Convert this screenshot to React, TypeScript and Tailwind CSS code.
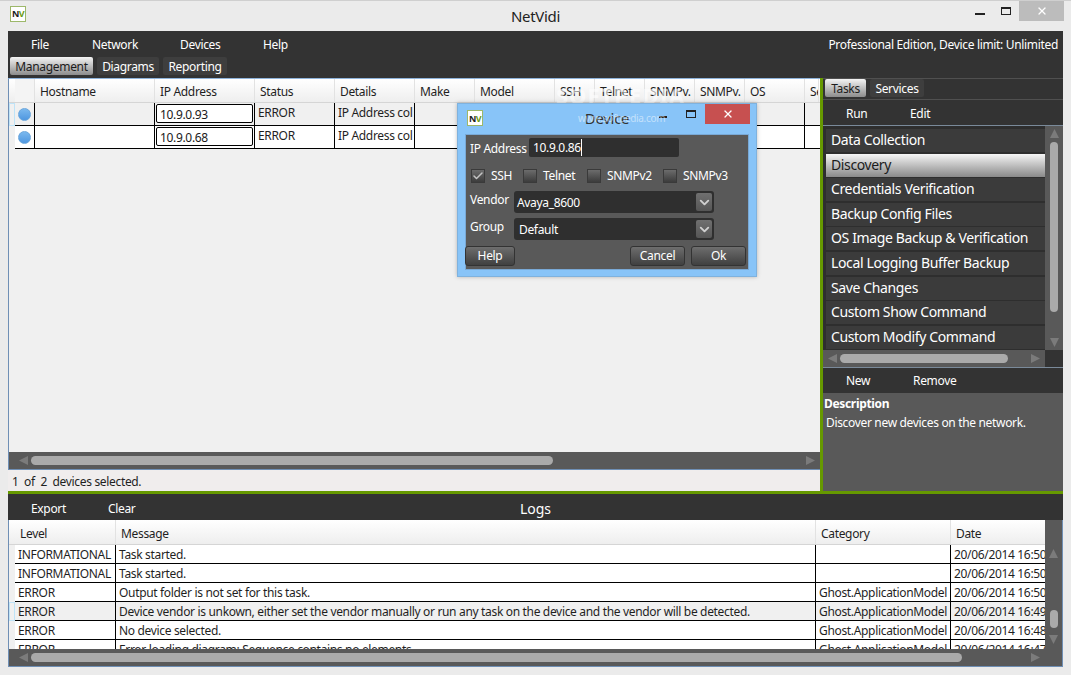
import React from "react";
import { Check, ChevronDown, X } from "lucide-react";

const deviceCols = [
  { name: "Hostname", w: "w-[120px]" },
  { name: "IP Address", w: "w-[100px]" },
  { name: "Status", w: "w-[80px]" },
  { name: "Details", w: "w-[80px]" },
  { name: "Make", w: "w-[60px]" },
  { name: "Model", w: "w-[80px]" },
  { name: "SSH", w: "w-[40px]" },
  { name: "Telnet", w: "w-[50px]" },
  { name: "SNMPv.", w: "w-[50px]" },
  { name: "SNMPv.", w: "w-[50px]" },
  { name: "OS", w: "w-[60px]" },
  { name: "Se", w: "w-[14px]" },
];

const tasks = [
  "Data Collection",
  "Discovery",
  "Credentials Verification",
  "Backup Config Files",
  "OS Image Backup & Verification",
  "Local Logging Buffer Backup",
  "Save Changes",
  "Custom Show Command",
  "Custom Modify Command",
];

const logs = [
  ["INFORMATIONAL", "Task started.", "", "20/06/2014 16:50"],
  ["INFORMATIONAL", "Task started.", "", "20/06/2014 16:50"],
  ["ERROR", "Output folder is not set for this task.", "Ghost.ApplicationModel", "20/06/2014 16:50"],
  ["ERROR", "Device vendor is unkown, either set the vendor manually or run any task on the device and the vendor will be detected.", "Ghost.ApplicationModel", "20/06/2014 16:49"],
  ["ERROR", "No device selected.", "Ghost.ApplicationModel", "20/06/2014 16:48"],
  ["ERROR", "Error loading diagram: Sequence contains no elements", "Ghost.ApplicationModel", "20/06/2014 16:47"],
];

const NvLogo = () => (
  <div className="w-[16px] h-[16px] bg-white border border-[#9db86a] flex items-center justify-center text-[9px] leading-none font-bold tracking-[-0.5px]">
    <span className="text-[#222]">N</span>
    <span className="text-[#6a9a10]">V</span>
  </div>
);

const Tri = ({ dir, className }: { dir: "l" | "r" | "u" | "d"; className?: string }) => {
  const pts = { l: "9,0 9,9 0,4.5", r: "0,0 0,9 9,4.5", u: "0,9 9,9 4.5,0", d: "0,0 9,0 4.5,9" }[dir];
  return (
    <svg width="9" height="9" viewBox="0 0 9 9" className={className}>
      <polygon points={pts} fill="#7b7b7b" />
    </svg>
  );
};

const HScroll = ({ thumb, pad, rest }: { thumb: string; pad: string; rest: string }) => (
  <div className={`h-full flex items-center bg-[#595959] ${pad}`}>
    <Tri dir="l" />
    <div className={`h-[9px] rounded-full bg-[#aaaaaa] ml-[3px] ${thumb}`} />
    <div className="flex-1" />
    <Tri dir="r" className={rest} />
  </div>
);

const Tab = ({ label, active, w }: { label: string; active?: boolean; w: string }) => (
  <div
    className={`h-[18px] rounded-[2px] pt-[1px] flex items-center justify-center ${w} ${
      active ? "bg-gradient-to-b from-[#f4f4f4] to-[#8d8d8d] text-[#1c1c1c]" : "bg-[#3e3e3e] text-white"
    }`}
  >
    {label}
  </div>
);

const Cb = ({ checked, label, w }: { checked?: boolean; label: string; w: string }) => (
  <div className={`flex items-center ${w}`}>
    <div className="w-[14px] h-[14px] bg-gradient-to-b from-[#6c6c6c] to-[#3c3c3c] border border-[#3a3a3a] flex items-center justify-center">
      {checked && <Check className="w-[12px] h-[12px] text-[#c4c4c4]" strokeWidth={3} />}
    </div>
    <span className="ml-[6px] text-white">{label}</span>
  </div>
);

const Combo = ({ value, pad }: { value: string; pad: string }) => (
  <div className={`w-[200px] h-[22px] bg-[#2f2f2f] rounded-[3px] flex items-center text-white ${pad}`}>
    <span className="flex-1 pt-[1px]">{value}</span>
    <div className="w-[16px] h-[18px] mr-[2px] rounded-[2px] bg-gradient-to-b from-[#707070] to-[#565656] flex items-center justify-center">
      <ChevronDown className="w-[15px] h-[15px] text-[#d0d0d0]" strokeWidth={3} />
    </div>
  </div>
);

const DlgBtn = ({ label, w }: { label: string; w: string }) => (
  <div className={`h-[20px] ${w} rounded-[3px] border border-[#333] bg-gradient-to-b from-[#6e6e6e] to-[#404040] text-white flex items-center justify-center`}>
    {label}
  </div>
);

const DeviceRow = ({ ip, alt }: { ip: string; alt?: boolean }) => (
  <div className={`flex h-[23px] ${alt ? "bg-[#f0f0f0]" : "bg-white"}`}>
    <div className={`w-[6px] bg-[#f0f0f0] ${alt ? "border border-[#bfe3f7]" : ""}`} />
    <div className="flex flex-1 border-b border-black">
      <div className="w-[20px] border-r border-black flex items-center justify-center">
        <div className="w-[13px] h-[13px] rounded-full bg-gradient-to-b from-[#7ab8ee] to-[#4f97e0] border border-[#6aa6dc]" />
      </div>
      <div className="w-[120px] border-r border-black" />
      <div className="w-[100px] border-r border-black p-[1px]">
        <div className="h-[19px] border border-black rounded-[2px] bg-white pl-[3px] pt-[2px] leading-[16px] text-[#1a1a1a]">{ip}</div>
      </div>
      <div className="w-[80px] border-r border-black pl-[3px] leading-[19px]">ERROR</div>
      <div className="w-[80px] border-r border-black pl-[3px] leading-[19px] overflow-hidden whitespace-nowrap">IP Address col</div>
      <div className="w-[60px] border-r border-black" />
      <div className="w-[330px] border-r border-black" />
    </div>
  </div>
);

export default function App() {
  return (
    <div className="w-[1071px] h-[675px] bg-[#ebebeb] border-t border-[#cfcfcf] flex flex-col relative overflow-hidden text-[12px] text-[#1f1f1f] font-['Noto_Sans',sans-serif] tracking-[-0.33px]">
      {/* title bar */}
      <div className="h-[30px] shrink-0 flex items-center relative pl-[10px]">
        <div className="mb-[5px]"><NvLogo /></div>
        <div className="absolute left-0 right-0 top-[4px] text-center text-[15px] text-[#222]">NetVidi</div>
        <div className="ml-auto flex items-start h-full">
          <div className="w-[10px] h-[2px] bg-[#222] mt-[12px] mr-[16px]" />
          <div className="w-[10px] h-[8px] border border-[#222] border-t-2 mt-[6px] mr-[8px]" />
          <div className="w-[45px] h-[20px] bg-[#bcbcbc] mr-[7px] flex items-center justify-center">
            <X className="w-[12px] h-[12px] text-white" strokeWidth={2.5} />
          </div>
        </div>
      </div>

      <div className="flex-1 flex flex-col mx-[8px] mb-[8px] min-h-0">
        {/* menu + tabs */}
        <div className="h-[47px] shrink-0 bg-[#333] text-white">
          <div className="flex h-[26px] items-center relative pt-[1px]">
            <span className="ml-[23px] w-[61px]">File</span>
            <span className="w-[88px]">Network</span>
            <span className="w-[83px]">Devices</span>
            <span>Help</span>
            <span className="ml-auto mr-[5px]">Professional Edition, Device limit: Unlimited</span>
          </div>
          <div className="flex gap-[4px] pl-[2px]">
            <Tab label="Management" active w="w-[83px]" />
            <Tab label="Diagrams" w="w-[62px]" />
            <Tab label="Reporting" w="w-[64px]" />
          </div>
        </div>

        {/* devices + tasks */}
        <div className="h-[413px] shrink-0 flex">
          <div className="w-[812px] flex flex-col">
            <div className="h-[393px] flex flex-col border-l border-b border-[#6f8fb5] bg-[#f0f0f0] border-t border-t-[#8fb4dc]">
              <div className="flex h-[24px] bg-gradient-to-b from-white to-[#eeeeee] border-b border-[#d5d5d5] pl-[6px]">
                <div className="w-[20px] border-r border-[#e2e2e2] bg-[#f4f4f4]" />
                {deviceCols.map((c, i) => (
                  <div key={i} className={`${c.w} border-r border-[#e2e2e2] pl-[5px] pt-[4px] overflow-hidden whitespace-nowrap`}>
                    {c.name}
                  </div>
                ))}
              </div>
              <DeviceRow ip="10.9.0.93" alt />
              <DeviceRow ip="10.9.0.68" />
              <div className="flex-1" />
              <div className="h-[17px] shrink-0">
                <HScroll thumb="w-[522px]" pad="pl-[10px]" rest="mr-[5px]" />
              </div>
            </div>
            <div className="flex-1 bg-[#f0eded] pl-[4px] pt-[3px] whitespace-pre">1  of  2  devices selected.</div>
          </div>
          <div className="w-[3px] bg-[#669900]" />
          {/* right panel */}
          <div className="flex-1 flex flex-col bg-[#333] text-white">
            <div className="h-[22px] border-y border-[#505050] flex items-start gap-[4px] pl-[2px]">
              <Tab label="Tasks" active w="w-[41px]" />
              <Tab label="Services" w="w-[54px]" />
            </div>
            <div className="h-[25px] flex items-center pt-[2px]">
              <span className="ml-[23px] w-[64px]">Run</span>
              <span>Edit</span>
            </div>
            <div className="h-[243px] flex flex-col border-y border-[#7a8a9a] text-[14px] tracking-[-0.37px]">
              <div className="flex flex-1 min-h-0">
                <div className="w-[222px] pl-[3px] bg-[#2e2e2e] pt-[3px] flex flex-col gap-[1.6px] overflow-hidden">
                  {tasks.map((t) => (
                    <div
                      key={t}
                      className={`h-[23px] shrink-0 pl-[5px] leading-[22px] whitespace-nowrap ${
                        t === "Discovery" ? "bg-gradient-to-b from-[#f6f6f6] to-[#8a8a8a] text-[#1c1c1c]" : "bg-[#3b3b3b] text-white"
                      }`}
                    >
                      {t}
                    </div>
                  ))}
                </div>
                <div className="flex-1 bg-[#595959] flex flex-col items-center pt-[3px] pb-[3px]">
                  <Tri dir="u" />
                  <div className="w-[8px] h-[170px] rounded-full bg-[#aaaaaa] mt-[4px]" />
                  <div className="flex-1" />
                  <Tri dir="d" />
                </div>
              </div>
              <div className="h-[17px] flex shrink-0">
                <div className="w-[222px]"><HScroll thumb="w-[168px]" pad="pl-[5px]" rest="mr-[5px]" /></div>
                <div className="flex-1 bg-[#333]" />
              </div>
            </div>
            <div className="h-[25px] flex items-center">
              <span className="ml-[23px] w-[67px]">New</span>
              <span>Remove</span>
            </div>
            <div className="flex-1 bg-[#595959] pl-[1px] pt-[2px]">
              <div className="font-bold">Description</div>
              <div className="pl-[2px] mt-[1px]">Discover new devices on the network.</div>
            </div>
          </div>
        </div>

        <div className="h-[3px] shrink-0 bg-[#669900]" />

        {/* logs */}
        <div className="h-[26px] shrink-0 bg-[#333] text-white flex items-center relative pt-[3px]">
          <span className="ml-[23px] w-[77px]">Export</span>
          <span>Clear</span>
          <span className="absolute left-0 right-0 text-center text-[14px] tracking-normal">Logs</span>
        </div>
        <div className="flex-1 min-h-0 border-l border-r border-b border-[#6f8fb5] flex flex-col overflow-hidden bg-white">
          <div className="flex-1 min-h-0 flex">
            <div className="flex-1 min-w-0 overflow-hidden">
              <div className="flex h-[25px] bg-gradient-to-b from-white to-[#eeeeee] border-b border-[#d5d5d5] pl-[6px]">
                <div className="w-[101px] border-r border-[#e2e2e2] pl-[5px] pt-[5px]">Level</div>
                <div className="w-[700px] border-r border-[#e2e2e2] pl-[5px] pt-[5px]">Message</div>
                <div className="w-[135px] border-r border-[#e2e2e2] pl-[5px] pt-[5px]">Category</div>
                <div className="w-[94px] pl-[5px] pt-[5px]">Date</div>
              </div>
              {logs.map((r, i) => (
                <div key={i} className={`flex h-[19px] ${i === 3 ? "bg-[#f0f0f0]" : "bg-white"}`}>
                  <div className={`w-[6px] shrink-0 bg-[#f0f0f0] ${i === 3 ? "border border-[#bfe3f7]" : ""}`} />
                  <div className="flex border-b border-black leading-[19px] whitespace-nowrap">
                    <div className="w-[101px] border-r border-black pl-[3px]">{r[0]}</div>
                    <div className="w-[700px] border-r border-black pl-[3px]">{r[1]}</div>
                    <div className="w-[135px] border-r border-black pl-[3px] overflow-hidden">{r[2]}</div>
                    <div className="w-[94px] pl-[3px] overflow-hidden">{r[3]}</div>
                  </div>
                </div>
              ))}
            </div>
            <div className="w-[17px] shrink-0 bg-[#595959] flex flex-col items-center pt-[29px] pb-[5px]">
              <Tri dir="u" />
              <div className="flex-1" />
              <div className="w-[8px] h-[18px] rounded-full bg-[#aaaaaa] mb-[7px]" />
              <Tri dir="d" />
            </div>
          </div>
          <div className="h-[17px] shrink-0">
            <HScroll thumb="w-[931px]" pad="pl-[10px]" rest="mr-[22px]" />
          </div>
        </div>
      </div>

      {/* softpedia watermark over the table header */}
      <div className="absolute left-[556px] top-[78px] text-[22px] font-bold tracking-[1px] text-white/60 pointer-events-none">SOFTPEDIA</div>

      {/* device dialog */}
      <div className="absolute left-[457px] top-[102px] w-[300px] h-[174px] bg-[#88c4f8] border border-[#7fb2de] shadow-[0_0_4px_rgba(0,0,0,0.25)] flex flex-col px-[7px]">
        <div className="h-[30px] shrink-0 flex relative">
          <div className="mt-[6px] ml-[2px]"><NvLogo /></div>
          <div className="absolute left-0 right-0 top-[3px] text-center text-[15px] text-[#333]">Device</div>
          <div className="absolute left-[113px] top-[7px] text-[10px] text-white/50 whitespace-nowrap">www.softpedia.com</div>
          <div className="ml-auto -mr-px flex items-start">
            <div className="w-[8px] h-[2px] bg-[#222] mt-[12px] mr-[19px]" />
            <div className="w-[10px] h-[8px] border border-[#222] border-t-2 mt-[6px] mr-[9px]" />
            <div className="w-[45px] h-[20px] bg-[#c75050] flex items-center justify-center">
              <X className="w-[12px] h-[12px] text-white" strokeWidth={2.5} />
            </div>
          </div>
        </div>
        <div className="h-[136px] bg-[#595959] border border-[#79a9d6] flex flex-col text-white">
          <div className="h-[20px] flex items-start mt-[3px] pl-[4px]">
            <span className="w-[59px] pt-[2px]">IP Address</span>
            <div className="w-[150px] h-[19px] bg-[#2f2f2f] rounded-[2px] pl-[4px] leading-[20px] flex">
              10.9.0.86<span className="w-px h-[17px] bg-white mt-[1px]" />
            </div>
          </div>
          <div className="flex mt-[10px] pl-[5px] h-[16px] items-center">
            <Cb checked label="SSH" w="w-[52px]" />
            <Cb label="Telnet" w="w-[64px]" />
            <Cb label="SNMPv2" w="w-[76px]" />
            <Cb label="SNMPv3" w="w-[70px]" />
          </div>
          <div className="flex mt-[7px] pl-[4px] items-start">
            <span className="w-[44px] leading-[18px]">Vendor</span>
            <Combo value="Avaya_8600" pad="pl-[3px]" />
          </div>
          <div className="flex mt-[5px] pl-[4px] items-start">
            <span className="w-[44px] leading-[18px]">Group</span>
            <Combo value="Default" pad="pl-[5px]" />
          </div>
          <div className="flex mt-[6px] -ml-px">
            <DlgBtn label="Help" w="w-[50px]" />
            <div className="flex-1" />
            <DlgBtn label="Cancel" w="w-[55px]" />
            <div className="w-[6px]" />
            <DlgBtn label="Ok" w="w-[55px]" />
            <div className="w-[2px]" />
          </div>
        </div>
      </div>
    </div>
  );
}
